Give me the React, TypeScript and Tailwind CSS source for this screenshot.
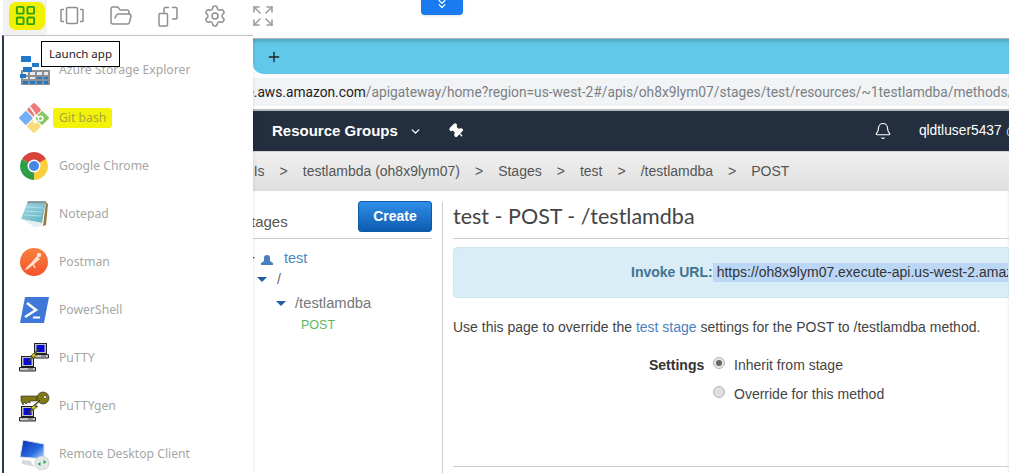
import { ChevronDown, ChevronsDown, Expand, FolderOpen, LayoutGrid, Plus, Settings, Bell, Pin } from 'lucide-react'

function WindowsIcon() {
  return (
    <svg width="24" height="20" viewBox="0 0 24 20" fill="none" stroke="#8f8f8f" strokeWidth="1.5">
      <rect x="6.5" y="1.5" width="11" height="16" rx="1.5" />
      <path d="M4 3.5H1.5a.5.5 0 0 0-.5.5v11a.5.5 0 0 0 .5.5H4M20 3.5h2.5a.5.5 0 0 1 .5.5v11a.5.5 0 0 1-.5.5H20" />
    </svg>
  )
}

function CopyIcon() {
  return (
    <svg width="22" height="22" viewBox="0 0 22 22" fill="none" stroke="#8f8f8f" strokeWidth="1.5">
      <path d="M2 9.5a1 1 0 0 1 1-1h6.5a1 1 0 0 1 1 1V20a1 1 0 0 1-1 1H3a1 1 0 0 1-1-1z" />
      <path d="M7 8V3.500a1 1 0 0 1 1-1h4M15 2.500h4a1 1 0 0 1 1 1V13a1 1 0 0 1-1 1h-4" />
    </svg>
  )
}

function AzureIcon() {
  return (
    <svg width="32" height="32" viewBox="0 0 32 32">
      <rect x="3" y="16" width="29" height="15" fill="#8a8f94" />
      <g fill="#e8eaec">
        <rect x="5" y="18" width="5" height="3" />
        <rect x="12" y="18" width="5" height="3" />
        <rect x="19" y="18" width="5" height="3" />
        <rect x="26" y="18" width="4" height="3" />
        <rect x="5" y="23" width="5" height="2" />
        <rect x="12" y="23" width="5" height="2" />
      </g>
      <g fill="#1f78c8">
        <rect x="3" y="2" width="10" height="6" />
        <rect x="14" y="9" width="7" height="4" />
        <rect x="5" y="13" width="9" height="5" />
        <rect x="2" y="20" width="6" height="4" />
        <rect x="19" y="23" width="5" height="2" />
        <rect x="26" y="23" width="4" height="2" />
        <rect x="5" y="27" width="5" height="3" />
        <rect x="12" y="27" width="5" height="3" />
        <rect x="19" y="27" width="5" height="3" />
        <rect x="26" y="27" width="4" height="3" />
      </g>
    </svg>
  )
}

function GitIcon() {
  return (
    <svg width="32" height="32" viewBox="0 0 32 32">
      <g transform="rotate(45 16 16)">
        <rect x="5" y="5" width="10.500" height="10.500" rx="1.500" fill="#ee7c7c" />
        <rect x="16.500" y="5" width="10.500" height="10.500" rx="1.500" fill="#8ac765" />
        <rect x="16.500" y="16.500" width="10.500" height="10.500" rx="1.500" fill="#f8dc80" />
        <rect x="5" y="16.500" width="10.500" height="10.500" rx="1.500" fill="#76aef5" />
      </g>
      <path d="M12 5l5 7v7M17 13l5 3" stroke="#fff" strokeWidth="1.500" fill="none" />
      <circle cx="22.500" cy="16.500" r="3" fill="#fff" />
      <circle cx="22.500" cy="16.500" r="1.500" fill="#8ac765" />
      <circle cx="17" cy="19.500" r="2" fill="#fff" />
    </svg>
  )
}

function ChromeIcon() {
  return (
    <svg width="32" height="32" viewBox="0 0 32 32">
      <path d="M16 16L3.880 9A14 14 0 0 1 28.120 9Z" fill="#d9443a" />
      <path d="M16 16L28.120 9A14 14 0 0 1 16 30Z" fill="#fbcf3a" />
      <path d="M16 16L16 30A14 14 0 0 1 3.880 9Z" fill="#2f9e4a" />
      <circle cx="16" cy="16" r="6.500" fill="#fff" />
      <circle cx="16" cy="16" r="5" fill="#4a86e8" />
    </svg>
  )
}

function NotepadIcon() {
  return (
    <svg width="32" height="32" viewBox="0 0 32 32">
      <defs>
        <linearGradient id="notepad-page" x1="0" y1="0" x2="1" y2="1">
          <stop offset="0" stopColor="#a8dbe6" />
          <stop offset="1" stopColor="#5fb0c4" />
        </linearGradient>
      </defs>
      <path d="M28 4l2 2-2 21-3 1z" fill="#9a7a3c" />
      <path d="M10 3H28L24 25 3 21z" fill="url(#notepad-page)" />
      <path d="M24 25L3 21l14 8 8-1z" fill="#e6eef0" />
      <path d="M10 3H28V5.500H9z" fill="#8a9aa0" />
      <path d="M8 9l17 1M7 13l17 1M6 17l17 1" stroke="#c4e6ee" strokeWidth=".7" />
    </svg>
  )
}

function PostmanIcon() {
  return (
    <svg width="32" height="32" viewBox="0 0 32 32">
      <defs>
        <linearGradient id="postman-bg" x1="0" y1="0" x2="0" y2="1">
          <stop offset="0" stopColor="#f7803f" />
          <stop offset="1" stopColor="#f5542a" />
        </linearGradient>
      </defs>
      <circle cx="16" cy="16" r="14" fill="url(#postman-bg)" />
      <circle cx="21" cy="9" r="2.200" fill="#fde0d0" />
      <path d="M19 10l-6 7-5 5-1 2 3-1 5-4 7-6z" fill="#fde0d0" />
      <path d="M15 18l2 4" stroke="#fde0d0" strokeWidth="1.500" />
    </svg>
  )
}

function PowerShellIcon() {
  return (
    <svg width="32" height="32" viewBox="0 0 32 32">
      <path d="M7 3H31L26 29H2z" fill="#3f78d8" />
      <path d="M9 9l9 7-11 7" stroke="#fff" strokeWidth="2.500" fill="none" />
      <path d="M15 23.500h7" stroke="#fff" strokeWidth="2" />
    </svg>
  )
}

function Laptop({ x, y }: { x: number; y: number }) {
  return (
    <g transform={`translate(${x} ${y})`}>
      <rect x="2.500" y=".5" width="12" height="10" fill="#c0c0c0" stroke="#222" />
      <rect x="4.500" y="2" width="8" height="7" fill="#0a0ad8" />
      <path d="M.5 11.500h16v3.500H.5z" fill="#c8c8c8" stroke="#222" />
      <path d="M9 13h5" stroke="#555" />
    </g>
  )
}

function Bolt({ x, y }: { x: number; y: number }) {
  return (
    <path
      transform={`translate(${x} ${y})`}
      d="M13 0L7 6 10 6 0 14 6 9 3.500 8.500 8 4.500z M13 0L8 6.500 11 6.500 1 14 5 8.500 3 8.500z"
      fill="#f6e81a"
      stroke="#222"
      strokeWidth=".5"
    />
  )
}

function PuttyIcon() {
  return (
    <svg width="32" height="32" viewBox="0 0 32 32">
      <Laptop x={14} y={1} />
      <Laptop x={1} y={14} />
      <Bolt x={9} y={6} />
    </svg>
  )
}

function PuttygenIcon() {
  return (
    <svg width="32" height="32" viewBox="0 0 32 32">
      <path d="M3 6H19V11H12V13L10 12 8 14 6 12 5 15 3 11z" fill="#7f7a12" stroke="#222" strokeWidth=".6" />
      <circle cx="25" cy="8" r="6" fill="#7f7a12" stroke="#222" strokeWidth=".6" />
      <circle cx="27" cy="7" r="1.500" fill="#fff" stroke="#222" strokeWidth=".5" />
      <Laptop x={1} y={16} />
      <Bolt x={9} y={10} />
    </svg>
  )
}

function RemoteIcon() {
  return (
    <svg width="32" height="32" viewBox="0 0 32 32">
      <defs>
        <linearGradient id="rdc-screen" x1="0" y1="0" x2="1" y2="1">
          <stop offset="0" stopColor="#0a2fb0" />
          <stop offset=".6" stopColor="#2a6ae0" />
          <stop offset="1" stopColor="#b8dcf8" />
        </linearGradient>
      </defs>
      <path d="M5 2L26 6V21L2 19z" fill="url(#rdc-screen)" stroke="#dfe6ee" />
      <path d="M4 22l9 1 1 3 4 3-14-3z" fill="#d4d8dc" />
      <circle cx="24" cy="25" r="7" fill="#e4e8e6" stroke="#b0b6b4" strokeWidth=".5" />
      <path d="M19.500 26l3-2v4zM28.500 24l-3-2v4z" fill="#2aa84a" />
    </svg>
  )
}

const apps = [
  { name: 'Azure Storage Explorer', icon: <AzureIcon /> },
  { name: 'Git bash', icon: <GitIcon />, marked: true },
  { name: 'Google Chrome', icon: <ChromeIcon /> },
  { name: 'Notepad', icon: <NotepadIcon /> },
  { name: 'Postman', icon: <PostmanIcon /> },
  { name: 'PowerShell', icon: <PowerShellIcon /> },
  { name: 'PuTTY', icon: <PuttyIcon /> },
  { name: 'PuTTYgen', icon: <PuttygenIcon /> },
  { name: 'Remote Desktop Client', icon: <RemoteIcon /> },
]

const crumbs = ['APIs', 'testlambda (oh8x9lym07)', 'Stages', 'test', '/testlamdba', 'POST']

function Caret() {
  return <span className="inline-block w-0 h-0 border-x-[5px] border-x-transparent border-t-[5px] border-t-[#1f5fa8]" />
}

export default function App() {
  return (
    <div className="relative w-[1009px] h-[473px] overflow-hidden bg-white font-['Liberation_Sans',sans-serif] text-[14px] text-[#444]">
      {/* toolbar */}
      <div className="relative z-20 flex items-center h-[38px] pl-[3px] pb-[6px]">
        <div className="flex items-center justify-center w-[44px] h-[35px] -mb-[3px] bg-[#f1f1f1] pt-[1px]">
          <div className="flex items-center justify-center w-[36px] h-[28px] mb-[5px] ml-[3px] bg-[#f0f000] rounded-[7px]">
            <LayoutGrid size={23} color="#2ea313" strokeWidth={2} className="-translate-x-[1px]" />
          </div>
        </div>
        <div className="flex justify-center w-[50px]"><WindowsIcon /></div>
        <div className="flex justify-center w-[48px]"><FolderOpen size={24} color="#8f8f8f" strokeWidth={1.5} /></div>
        <div className="flex justify-center w-[46px]"><CopyIcon /></div>
        <div className="flex justify-center w-[48px]"><Settings size={24} color="#8f8f8f" strokeWidth={1.5} /></div>
        <div className="flex justify-center w-[48px]"><Expand size={24} color="#9a9a9a" strokeWidth={1.5} /></div>
      </div>

      <div className="absolute z-20 left-[421px] top-0 flex justify-center items-start w-[42px] h-[15px] bg-[#1a7bf0] rounded-b-[4px] shadow-sm">
        <ChevronsDown size={14} color="#fff" strokeWidth={2} className="-mt-[3px]" />
      </div>

      {/* browser behind the menu */}
      <div className="border-t border-[#b4b4b4] shadow-[inset_0_2px_3px_rgba(0,0,0,0.15)]">
        <div className="flex items-center ml-[253px] h-[35px] pl-[13px] bg-[#62c8e9] rounded-bl-[10px] shadow-[inset_0_4px_4px_-2px_rgba(0,0,0,0.2)]">
          <Plus size={16} color="#222" strokeWidth={2} />
        </div>
        <div className="flex items-center mt-[4px] h-[28px] pl-[161px] bg-[#f1f3f5] text-[13.75px] whitespace-nowrap font-['Roboto',sans-serif]">
          <span className="text-[#222]">https://console.aws.amazon.com</span>
          <span className="text-[#7a7f85]">/apigateway/home?region=us-west-2#/apis/oh8x9lym07/stages/test/resources/~1testlamdba/methods/POST</span>
        </div>
        <div className="mt-[3px] border-t-2 border-[#b9bcbe]" />

        <div className="flex items-center h-[40px] pl-[272px] bg-[#232f3e] text-white whitespace-nowrap">
          <span className="font-bold text-[15px]">Resource Groups</span>
          <ChevronDown size={13} strokeWidth={2.5} className="ml-[11px] shrink-0" />
          <Pin size={16} fill="#fff" strokeWidth={2} className="ml-[27px] -rotate-45 shrink-0" />
          <Bell size={18} strokeWidth={1.5} className="ml-[409px] shrink-0" />
          <span className="ml-[27px] text-[13.8px]">qldtluser5437</span>
          <span className="ml-[4px] text-[13.5px] text-[#bcdcf5]">@</span>
        </div>

        <div className="flex items-center gap-[15px] h-[40px] pl-[235px] border-t border-[#d2d2d2] bg-gradient-to-b from-[#f0f0f0] to-[#dfdfdf] text-[#555] whitespace-nowrap">
          {crumbs.map((crumb, i) => (
            <div key={crumb} className="flex items-center gap-[15px]">
              {i > 0 && <span>&gt;</span>}
              <span>{crumb}</span>
            </div>
          ))}
        </div>

        <div className="flex pt-[11px]">
          <div className="flex flex-col w-[443px] pr-[10px] border-r border-[#cccccc] h-[272px] shrink-0">
            <div className="flex items-center justify-between h-[37px] pl-[241px] pb-[1px] border-b border-[#cccccc]">
              <span className="text-[15px] text-[#555] mt-[6px]">Stages</span>
              <button className="w-[74px] h-[31px] -mt-[6px] rounded-[3px] border border-[#0d5aa7] bg-gradient-to-b from-[#2f8fe8] to-[#0c5cb0] text-white font-bold text-[14px]">Create</button>
            </div>
            <div className="flex items-center h-[20px] mt-[10px] pl-[245px]">
              <span className="mr-[5px] flex"><Caret /></span>
              <svg width="14" height="13" viewBox="0 0 14 13" fill="#4a7fbf" className="mr-[10px]">
                <path d="M4 5a3 3 0 0 1 6 0v3l3 2v2H1v-2l3-2z" />
              </svg>
              <span className="text-[#4a86c5] text-[14.5px]">test</span>
            </div>
            <div className="flex items-center gap-[10px] h-[20px] pl-[257px]">
              <Caret />
              <span className="text-[#666]">/</span>
            </div>
            <div className="flex items-center gap-[9px] h-[20px] mt-[4px] pl-[276px]">
              <Caret />
              <span className="text-[#777] text-[14.75px]">/testlamdba</span>
            </div>
            <div className="mt-[3px] pl-[301px] text-[12.5px] text-[#5cb85c]">POST</div>
          </div>

          <div className="flex-1 min-w-0 pl-[10px]">
            <div className="h-[37px] border-b border-[#cccccc] font-['Lato',sans-serif] text-[21.5px] leading-[28px] text-[#444] whitespace-nowrap">
              test - POST - /testlamdba
            </div>
            <div className="flex items-center h-[51px] mt-[8px] pl-[177px] bg-[#d9edf7] border border-[#cde6ee] rounded-l-[4px] whitespace-nowrap overflow-hidden">
              <span className="font-bold text-[#44738f]">Invoke URL:</span>
              <span className="pl-[4px] h-[19px] leading-[19px] bg-[#bcd7f6] text-[#333]">https://oh8x9lym07.execute-api.us-west-2.amazonaws.com/test/testlamdba</span>
            </div>
            <p className="mt-[19px] whitespace-nowrap">
              Use this page to override the <span className="text-[#4a7fbf]">test stage</span> settings for the POST to /testlamdba method.
            </p>
            <div className="flex mt-[15px] pl-[196px]">
              <span className="w-[64px] font-bold text-[#333] leading-[24px]">Settings</span>
              <div className="flex flex-col gap-[5px]">
                <div className="flex items-center gap-[9px] h-[24px]">
                  <span className="flex items-center justify-center w-[12px] h-[12px] -mt-[4px] rounded-full border border-[#b5b5b5] bg-[#e6e6e6]">
                    <span className="w-[6px] h-[6px] rounded-full bg-[#666]" />
                  </span>
                  <span>Inherit from stage</span>
                </div>
                <div className="flex items-center gap-[9px] h-[24px]">
                  <span className="w-[12px] h-[12px] -mt-[4px] rounded-full border border-[#b5b5b5] bg-[#e0e0e0]" />
                  <span>Override for this method</span>
                </div>
              </div>
            </div>
            <div className="mt-[60px] border-t border-[#cccccc]" />
          </div>
        </div>
      </div>

      {/* launch app menu */}
      <div className="absolute z-10 left-0 top-[35px] bottom-0 w-[253px] pl-[2px] bg-white font-['Noto_Sans',sans-serif] text-[12.2px] text-[#a6a6a6]">
        <div className="h-full pt-[10px] border-l-2 border-l-[#2b3655] border-t border-t-[#c6c6c6] shadow-[1px_0_3px_rgba(0,0,0,0.08)]">
          {apps.map(app => (
            <div key={app.name} className="flex items-center gap-[9px] h-[48px] pl-[14px]">
              {app.icon}
              <span className={app.marked ? 'px-[6px] -mx-[6px] py-[1px] rounded-[3px] bg-[#f2f20a] text-[#a8a83a]' : ''}>{app.name}</span>
            </div>
          ))}
        </div>
      </div>

      <div className="absolute z-30 left-[41px] top-[41px] flex items-center justify-center w-[79px] h-[26px] bg-white border border-black font-['Noto_Sans',sans-serif] text-[11.5px] text-[#222]">
        Launch app
      </div>
    </div>
  )
}
